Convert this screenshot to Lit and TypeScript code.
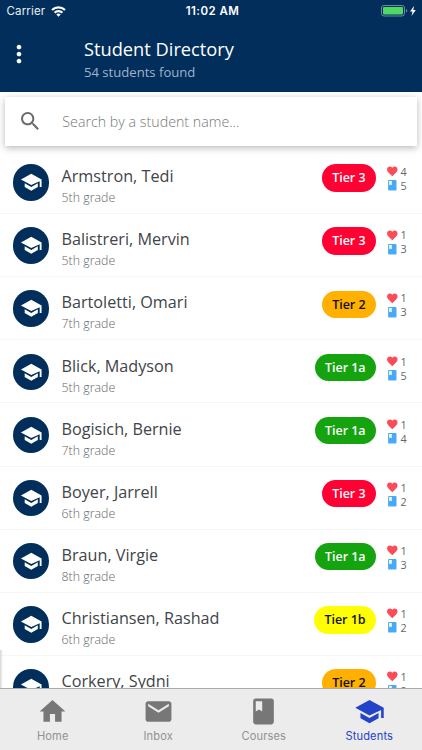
import { LitElement, html, css, svg } from "lit";
import { customElement, property } from "lit/decorators.js";

const ICONS: Record<string, string> = {
  school: "M5 13.18v4L12 21l7-3.82v-4L12 17l-7-3.82zM12 3L1 9l11 6 9-4.09V17h2V9L12 3z",
  home: "M10 20v-6h4v6h5v-8h3L12 3 2 12h3v8z",
  mail: "M20 4H4c-1.1 0-1.99.9-1.99 2L2 18c0 1.1.9 2 2 2h16c1.1 0 2-.9 2-2V6c0-1.1-.9-2-2-2zm0 4l-8 5-8-5V6l8 5 8-5v2z",
  book: "M18 2H6c-1.1 0-2 .9-2 2v16c0 1.1.9 2 2 2h12c1.1 0 2-.9 2-2V4c0-1.1-.9-2-2-2zM6 4h5v8l-2.5-1.5L6 12V4z",
  heart: "M12 21.35l-1.45-1.32C5.4 15.36 2 12.28 2 8.5 2 5.42 4.42 3 7.5 3c1.74 0 3.41.81 4.5 2.09C13.09 3.81 14.76 3 16.5 3 19.58 3 22 5.42 22 8.5c0 3.78-3.4 6.86-8.55 11.54L12 21.35z",
  search: "M15.5 14h-.79l-.28-.27C15.41 12.59 16 11.11 16 9.5 16 5.91 13.09 3 9.5 3S3 5.91 3 9.5 5.91 16 9.5 16c1.61 0 3.09-.59 4.23-1.57l.27.28v.79l5 4.99L20.49 19l-4.99-5zm-6 0C7.01 14 5 11.99 5 9.5S7.01 5 9.5 5 14 7.01 14 9.5 11.99 14 9.5 14z",
  more: "M12 8c1.1 0 2-.9 2-2s-.9-2-2-2-2 .9-2 2 .9 2 2 2zm0 2c-1.1 0-2 .9-2 2s.9 2 2 2 2-.9 2-2-.9-2-2-2zm0 6c-1.1 0-2 .9-2 2s.9 2 2 2 2-.9 2-2-.9-2-2-2z",
};

@customElement("md-icon")
class MdIcon extends LitElement {
  @property() name = "";
  static styles = css`
    :host { display: block; flex: none; }
    .glyph { display: block; width: 100%; height: 100%; fill: currentColor; }
  `;
  render() {
    return html`<svg class="glyph" viewBox="0 0 24 24">${svg`<path d=${ICONS[this.name]}></path>`}</svg>`;
  }
}

interface Student {
  name: string;
  grade: string;
  tier: string;
  hearts: number;
  books: number;
}

const STUDENTS: Student[] = [
  { name: "Armstron, Tedi", grade: "5th grade", tier: "3", hearts: 4, books: 5 },
  { name: "Balistreri, Mervin", grade: "5th grade", tier: "3", hearts: 1, books: 3 },
  { name: "Bartoletti, Omari", grade: "7th grade", tier: "2", hearts: 1, books: 3 },
  { name: "Blick, Madyson", grade: "5th grade", tier: "1a", hearts: 1, books: 5 },
  { name: "Bogisich, Bernie", grade: "7th grade", tier: "1a", hearts: 1, books: 4 },
  { name: "Boyer, Jarrell", grade: "6th grade", tier: "3", hearts: 1, books: 2 },
  { name: "Braun, Virgie", grade: "8th grade", tier: "1a", hearts: 1, books: 3 },
  { name: "Christiansen, Rashad", grade: "6th grade", tier: "1b", hearts: 1, books: 2 },
  { name: "Corkery, Sydni", grade: "7th grade", tier: "2", hearts: 1, books: 2 },
];

@customElement("student-row")
class StudentRow extends LitElement {
  @property({ attribute: false }) student!: Student;
  static styles = css`
    :host {
      display: flex; flex: none; box-sizing: border-box; height: 63.14px;
      border-bottom: 1px solid #f6f6f6; padding: 0 16px 0 12.5px;
      font-family: "Open Sans", sans-serif;
    }
    .avatar {
      width: 36.5px; height: 36.5px; margin-top: 13.3px; border-radius: 50%;
      background: #012e5b; color: #fff; display: flex; align-items: center; justify-content: center;
    }
    .avatar md-icon { width: 22.5px; height: 22.5px; }
    .who { flex: 1; margin-left: 12.5px; padding-top: 13.3px; white-space: nowrap; }
    .name { font-size: 16.2px; line-height: 24px; color: #414449; }
    .grade { font-size: 12.4px; line-height: 18px; font-weight: 300; color: #666; margin-top: 1px; }
    .tier {
      height: 27.4px; line-height: 28.4px; margin-top: 13.4px; padding: 0 10.5px; border-radius: 14px;
      font-size: 12.5px; letter-spacing: -0.05px; font-weight: 550; color: #fff;
    }
    .t3 { background: #ff0233; }
    .t2 { background: #ffb000; color: #111; }
    .t1a { background: #15a40f; }
    .t1b { background: #ffff02; color: #111; }
    .stats { width: 20px; margin-left: 10px; padding-top: 13.8px; }
    .stat { display: flex; align-items: center; height: 14px; font-size: 10.8px; color: #666; }
    .stat md-icon { width: 12.6px; height: 12.6px; margin-right: 1.9px; }
    .heart { color: #fb4d58; }
    .book { color: #46a9fa; }
  `;
  render() {
    const s = this.student;
    return html`
      <div class="avatar"><md-icon name="school"></md-icon></div>
      <div class="who">
        <div class="name">${s.name}</div>
        <div class="grade">${s.grade}</div>
      </div>
      <div class="tier t${s.tier}">Tier ${s.tier}</div>
      <div class="stats">
        <div class="stat"><md-icon class="heart" name="heart"></md-icon>${s.hearts}</div>
        <div class="stat"><md-icon class="book" name="book"></md-icon>${s.books}</div>
      </div>`;
  }
}

const TABS = [
  { icon: "home", label: "Home" },
  { icon: "mail", label: "Inbox" },
  { icon: "book", label: "Courses" },
  { icon: "school", label: "Students" },
];

@customElement("app-root")
class AppRoot extends LitElement {
  static styles = css`
    :host {
      display: flex; flex-direction: column; width: 422px; height: 750px; overflow: hidden;
      background: #fff; font-family: "Open Sans", sans-serif;
    }
    .top { flex: none; height: 91.5px; background: #012e5b; color: #fff; }
    .status {
      display: grid; grid-template-columns: 1fr auto 1fr; align-items: center; height: 22px;
      padding: 0 5px 0 6.5px; font-family: Inter, sans-serif; font-size: 11.5px; color: #e8eef5;
    }
    .carrier { display: flex; align-items: center; gap: 5.5px; letter-spacing: 0.15px; }
    .wifi { width: 15px; height: 11px; display: block; }
    .clock { font-weight: 600; color: #fff; letter-spacing: 0.45px; margin-left: 1.5px; }
    .power { display: flex; justify-content: flex-end; }
    .battery { width: 36px; height: 12px; display: block; }
    .bar { display: flex; }
    .bar md-icon { width: 28px; height: 28px; margin: 18px 0 0 4.5px; }
    .titles { margin-left: 51.5px; padding-top: 14px; }
    .title { font-size: 18.25px; line-height: 26px; }
    .count { font-size: 13.1px; line-height: 19px; color: #9fb3ca; padding-top: 0.5px; }
    .search {
      flex: none; display: flex; align-items: center; height: 49px; margin: 5.3px 5.3px 0;
      background: #fff; box-shadow: 0 2px 7px rgba(0, 0, 0, 0.28); color: #6b6b6b;
    }
    .search md-icon { width: 24.5px; height: 24.5px; margin-left: 12.7px; }
    .hint { margin-left: 19.8px; font-size: 14.25px; font-weight: 300; color: #777; }
    .list {
      flex: 1; min-height: 0; overflow: hidden; display: flex; flex-direction: column;
      padding-top: 5.1px; position: relative;
    }
    .edge {
      position: absolute; left: 0; bottom: 0; width: 3px; height: 38px;
      background: linear-gradient(to right, #d6d6d6, rgba(255, 255, 255, 0));
    }
    .tabs {
      flex: none; box-sizing: border-box; height: 62px; display: grid; grid-template-columns: repeat(4, 1fr);
      background: #ececec; border-top: 1px solid #aaa; color: #777;
    }
    .tab { display: flex; flex-direction: column; align-items: center; padding-top: 7px; }
    .tab md-icon { width: 31px; height: 31px; }
    .label {
      font-size: 11.1px; line-height: 16px; margin-top: 1px; letter-spacing: 0.15px;
      color: #929292; font-family: Inter, sans-serif;
    }
    .active, .active .label { color: #2343c9; }
  `;
  render() {
    return html`
      <header class="top">
        <div class="status">
          <div class="carrier">Carrier
            <svg class="wifi" viewBox="0 0 15 11" fill="none" stroke="#fff" stroke-width="2.2">
              <path d="M1 4a9.2 9.2 0 0 1 13 0"></path>
              <path d="M3.6 6.7a5.5 5.5 0 0 1 7.8 0"></path>
              <path d="M7.5 10.8L5.3 8.6a3.1 3.1 0 0 1 4.4 0z" fill="#fff" stroke="none"></path>
            </svg>
          </div>
          <div class="clock">11:02 AM</div>
          <div class="power">
            <svg class="battery" viewBox="0 0 36 12">
              <rect x="0.5" y="0.5" width="23" height="10.5" rx="2.5" fill="none" stroke="#7189a4"></rect>
              <rect x="2" y="2" width="20" height="7.5" rx="1" fill="#4cd964"></rect>
              <path d="M25 4v3.5q1.3-.5 1.3-1.75T25 4z" fill="#7189a4"></path>
              <path d="M33.2 0.8L29 6.4h2.5l-1 4.6 4.3-6h-2.6z" fill="#fff"></path>
            </svg>
          </div>
        </div>
        <div class="bar">
          <md-icon name="more"></md-icon>
          <div class="titles">
            <div class="title">Student Directory</div>
            <div class="count">54 students found</div>
          </div>
        </div>
      </header>
      <div class="search"><md-icon name="search"></md-icon><div class="hint">Search by a student name...</div></div>
      <main class="list">
        ${STUDENTS.map((s) => html`<student-row .student=${s}></student-row>`)}
        <div class="edge"></div>
      </main>
      <nav class="tabs">
        ${TABS.map((t) => html`<div class="tab ${t.label === "Students" ? "active" : ""}">
          <md-icon name=${t.icon}></md-icon><div class="label">${t.label}</div>
        </div>`)}
      </nav>`;
  }
}
